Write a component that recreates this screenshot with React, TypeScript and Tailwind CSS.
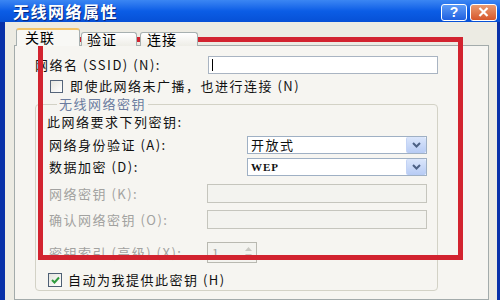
import React from "react";

const F = "font-['Noto_Sans_CJK_SC',sans-serif]";

function Chevron() {
  return (
    <div className="w-[20px] h-full flex items-center justify-center bg-gradient-to-b from-[#dbe6fb] to-[#b7cbf4] border-l border-[#c3d3f5] rounded-[2px]">
      <svg width="9" height="6" viewBox="0 0 9 6">
        <path d="M1 1 L4.5 4.5 L8 1" fill="none" stroke="#4d6185" strokeWidth="2" />
      </svg>
    </div>
  );
}

export default function App() {
  return (
    <div className={`w-[500px] h-[300px] overflow-hidden relative flex flex-col bg-[#0831a8] ${F}`}>
      {/* Title bar */}
      <div className="h-[22px] shrink-0 flex items-center justify-between pl-[13px] pr-[3px] bg-gradient-to-b from-[#3b86f3] via-[#0b5de6] to-[#0650d6]">
        <span className="text-white font-bold text-[16px] tracking-[1.5px] leading-none [text-shadow:1px_1px_0_#0a2a80]">无线网络属性</span>
        <div className="flex gap-[3px] items-center pt-[2px]">
          <div className="w-[26px] h-[17px] rounded-[3px] border border-white bg-gradient-to-b from-[#5d9bf7] to-[#1f5fe0] flex items-center justify-center text-white font-bold text-[14px] leading-none font-['Liberation_Sans',sans-serif]">?</div>
          <div className="w-[27px] h-[17px] rounded-[3px] border border-white bg-gradient-to-b from-[#e99a70] to-[#d6562a] flex items-center justify-center">
            <svg width="11" height="10" viewBox="0 0 11 10">
              <path d="M1.5 1 L9.5 9 M9.5 1 L1.5 9" stroke="white" strokeWidth="2.2" />
            </svg>
          </div>
        </div>
      </div>

      {/* Body */}
      <div className="flex-1 flex flex-col ml-[5px] mr-[3px] bg-[#ecebe3] pl-[9px] pr-[8px] pt-[6px]">
        {/* Tabs */}
        <div className="flex items-end h-[18px] relative z-10 pl-[2px] text-[14px] tracking-[1px] text-black">
          <div className="w-[64px] h-[18px] bg-[#f8f8f5] border border-b-0 border-[#a7b0b0] border-t-[2px] border-t-[#f2c468] rounded-t-[3px] pl-[8px] leading-[15px]">关联</div>
          <div className="w-[56px] h-[14px] ml-[1px] bg-gradient-to-b from-white to-[#eeede7] border border-b-0 border-[#a7b0b0] rounded-t-[3px] pl-[5px] leading-[12px]">验证</div>
          <div className="w-[58px] h-[14px] ml-[3px] bg-gradient-to-b from-white to-[#eeede7] border border-b-0 border-[#a7b0b0] rounded-t-[3px] pl-[6px] leading-[12px]">连接</div>
        </div>

        {/* Panel */}
        <div className="flex-1 -mt-[1px] border border-[#a3abab] bg-[#f6f5f1] pt-[10px] pl-[20px] text-[13px] tracking-[1.5px] text-[#111]">
          <div className="flex items-center h-[18px]">
            <span className="w-[173px]">网络名 (SSID) (N):</span>
            <div className="w-[230px] h-[18px] bg-white border border-[#a9b4c2] flex items-center pl-[3px]">
              <div className="w-[1px] h-[12px] bg-black" />
            </div>
          </div>
          <div className="flex items-center h-[18px] mt-[3px] pl-[15px]">
            <div className="w-[13px] h-[13px] border border-[#55657a] bg-gradient-to-br from-[#e6e6e0] to-white" />
            <span className="ml-[7px]">即使此网络未广播，也进行连接 (N)</span>
          </div>

          <fieldset className="mt-[0px] w-[403px] border border-[#d3d2c6] rounded-[4px] pl-[13px] pb-[1px]">
            <legend className="ml-[8px] px-[2px] text-[#6b7c9f] leading-[18px]">无线网络密钥</legend>
            <div className="h-[18px] flex items-center -ml-[2px]">此网络要求下列密钥:</div>
            <div className="flex items-center h-[18px] mt-[5px]">
              <span className="w-[198px]">网络身份验证 (A):</span>
              <div className="w-[180px] h-[18px] bg-white border border-[#9fb0c4] flex items-center justify-between">
                <span className="pl-[3px]">开放式</span>
                <Chevron />
              </div>
            </div>
            <div className="flex items-center h-[18px] mt-[4px]">
              <span className="w-[198px]">数据加密 (D):</span>
              <div className="w-[180px] h-[18px] bg-white border border-[#9fb0c4] flex items-center justify-between">
                <span className="pl-[3px] font-['Liberation_Serif',serif] font-bold text-[11px] tracking-[1px]">WEP</span>
                <Chevron />
              </div>
            </div>
            <div className="flex items-center h-[19px] mt-[8px] text-[#a2a2a0]">
              <span className="w-[158px]">网络密钥 (K):</span>
              <div className="w-[220px] h-[19px] bg-[#f3f3ef] border border-[#c5c5bd]" />
            </div>
            <div className="flex items-center h-[19px] mt-[7px] text-[#a2a2a0]">
              <span className="w-[158px]">确认网络密钥 (O):</span>
              <div className="w-[220px] h-[19px] bg-[#f3f3ef] border border-[#c5c5bd]" />
            </div>
            <div className="flex items-center h-[21px] mt-[13px] text-[#a2a2a0]">
              <span className="w-[158px]">密钥索引 (高级) (X):</span>
              <div className="w-[50px] h-[21px] bg-[#f3f3ef] border border-[#b9b9b1] flex items-center justify-between">
                <span className="pl-[4px] text-[12px]">1</span>
                <div className="w-[15px] h-full flex flex-col items-center justify-center gap-[3px]">
                  <svg width="7" height="4" viewBox="0 0 7 4"><path d="M0 4 L3.5 0 L7 4Z" fill="#c9c9c3" /></svg>
                  <svg width="7" height="4" viewBox="0 0 7 4"><path d="M0 0 L3.5 4 L7 0Z" fill="#c9c9c3" /></svg>
                </div>
              </div>
            </div>
            <div className="flex items-center h-[18px] mt-[8px] -ml-[1px]">
              <div className="w-[14px] h-[14px] border border-[#4e5f74] bg-gradient-to-br from-[#e4e4de] to-white flex items-center justify-center">
                <svg width="9" height="8" viewBox="0 0 9 8">
                  <path d="M1 4 L3.5 6.5 L8 1.5" fill="none" stroke="#2f9b3e" strokeWidth="2" />
                </svg>
              </div>
              <span className="ml-[6px]">自动为我提供此密钥 (H)</span>
            </div>
          </fieldset>
        </div>
      </div>

      {/* Red highlight overlay */}
      <div className="absolute left-[38px] top-[37px] w-[425px] h-[223px] border-[5px] border-[#d2232f] pointer-events-none" />
    </div>
  );
}
